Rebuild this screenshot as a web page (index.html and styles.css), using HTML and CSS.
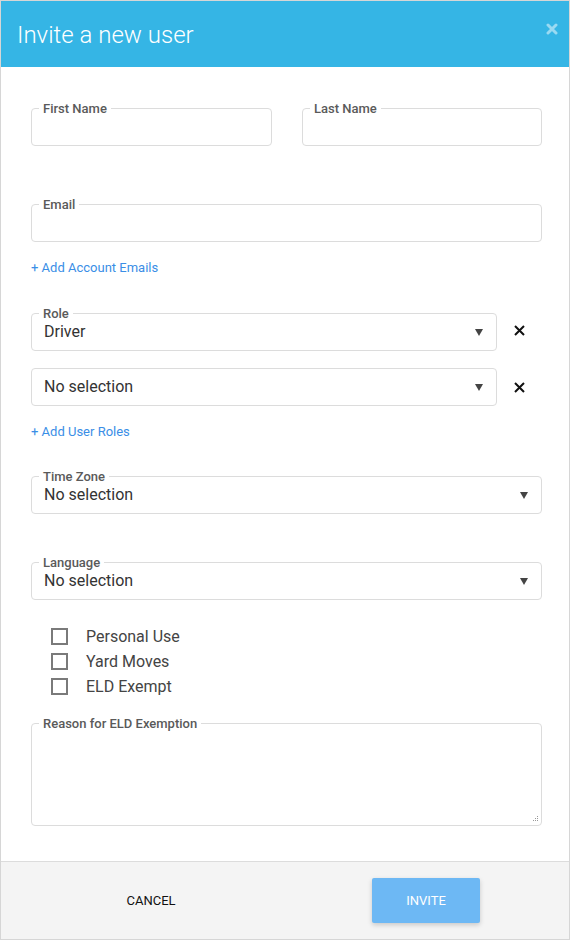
FILE: index.html
```html
<!DOCTYPE html>
<html lang="en">
<head>
<meta charset="utf-8">
<title>Invite a new user</title>
<link rel="stylesheet" href="styles.css">
</head>
<body>
<div class="modal">
  <header class="modal-header">
    <h1 class="modal-title">Invite a new user</h1>
    <button class="close-btn" aria-label="Close">
      <svg width="12" height="12" viewBox="0 0 12 12"><path d="M2 2 L10 10 M10 2 L2 10" stroke="currentColor" stroke-width="3" stroke-linecap="round"/></svg>
    </button>
  </header>

  <main class="modal-body">
    <div class="row-2">
      <fieldset class="field"><legend>First Name</legend><div class="value"></div></fieldset>
      <fieldset class="field"><legend>Last Name</legend><div class="value"></div></fieldset>
    </div>

    <fieldset class="field gap-51"><legend>Email</legend><div class="value"></div></fieldset>
    <a class="add-link" href="#">+ Add Account Emails</a>

    <div class="role-row gap-30">
      <fieldset class="field select"><legend>Role</legend><div class="value">Driver</div>
        <svg class="arrow" width="8" height="7" viewBox="0 0 8 7"><path d="M0 0 H8 L4 7 Z" fill="#444"/></svg>
      </fieldset>
      <button class="remove-btn remove-legend" aria-label="Remove">
        <svg width="11" height="11" viewBox="0 0 11 11"><path d="M1 1 L10 10 M10 1 L1 10" stroke="#111" stroke-width="2"/></svg>
      </button>
    </div>
    <div class="role-row gap-17">
      <div class="box select"><div class="value">No selection</div>
        <svg class="arrow" width="8" height="7" viewBox="0 0 8 7"><path d="M0 0 H8 L4 7 Z" fill="#444"/></svg>
      </div>
      <button class="remove-btn" aria-label="Remove">
        <svg width="11" height="11" viewBox="0 0 11 11"><path d="M1 1 L10 10 M10 1 L1 10" stroke="#111" stroke-width="2"/></svg>
      </button>
    </div>
    <a class="add-link" href="#">+ Add User Roles</a>

    <fieldset class="field select gap-29"><legend>Time Zone</legend><div class="value">No selection</div>
      <svg class="arrow" width="8" height="7" viewBox="0 0 8 7"><path d="M0 0 H8 L4 7 Z" fill="#444"/></svg>
    </fieldset>

    <fieldset class="field select gap-41"><legend>Language</legend><div class="value">No selection</div>
      <svg class="arrow" width="8" height="7" viewBox="0 0 8 7"><path d="M0 0 H8 L4 7 Z" fill="#444"/></svg>
    </fieldset>

    <ul class="checks">
      <li><span class="checkbox"></span><span>Personal Use</span></li>
      <li><span class="checkbox"></span><span>Yard Moves</span></li>
      <li><span class="checkbox"></span><span>ELD Exempt</span></li>
    </ul>

    <fieldset class="field textarea"><legend>Reason for ELD Exemption</legend>
      <div class="textarea-area">
        <svg class="grip" width="7" height="7" viewBox="0 0 7 7">
          <rect x="5" y="0" width="1" height="1" fill="#999"/>
          <rect x="3" y="2" width="1" height="1" fill="#999"/>
          <rect x="5" y="2" width="1" height="1" fill="#999"/>
          <rect x="1" y="4" width="1" height="1" fill="#999"/>
          <rect x="3" y="4" width="1" height="1" fill="#999"/>
          <rect x="5" y="4" width="1" height="1" fill="#999"/>
        </svg>
      </div>
    </fieldset>
  </main>

  <footer class="modal-footer">
    <button class="btn-cancel">CANCEL</button>
    <button class="btn-invite">INVITE</button>
  </footer>
</div>
</body>
</html>
```

FILE: styles.css
```css
* { box-sizing: border-box; }

html, body {
  margin: 0;
  padding: 0;
  background: #fff;
}

body {
  font-family: Roboto, "Liberation Sans", Arial, sans-serif;
  color: #333;
}

.modal {
  width: 570px;
  height: 940px;
  border: 1px solid #d6d6d6;
  display: flex;
  flex-direction: column;
  background: #fff;
}

.modal-header {
  height: 66px;
  background: #35b5e5;
  display: flex;
  align-items: flex-start;
  justify-content: space-between;
  padding: 0 11px 0 16px;
}

.modal-title {
  margin: 0;
  font-weight: 300;
  font-size: 24px;
  line-height: 28px;
  color: #fff;
  padding-top: 20px;
}

.close-btn {
  border: 0;
  background: none;
  padding: 0;
  margin-top: 22px;
  width: 12px;
  height: 12px;
  color: rgba(255, 255, 255, 0.5);
  display: block;
}
.close-btn svg { display: block; }

.modal-body {
  flex: 1;
  padding: 34px 27px 0 30px;
  display: flex;
  flex-direction: column;
}

.row-2 {
  display: grid;
  grid-template-columns: 241px 240px;
  column-gap: 30px;
}

.field {
  margin: 0;
  min-width: 0;
  border: 1px solid #dcdcdc;
  border-radius: 4px;
  padding: 3px 12px 9px 12px;
  position: relative;
}

.field legend {
  font-size: 13px;
  line-height: 12px;
  height: 14px;
  font-weight: 500;
  color: #5a5a5a;
  padding: 2px 4px 0 4px;
  margin-left: -5px;
}

.value {
  font-size: 16px;
  line-height: 18px;
  height: 18px;
  color: #333;
}

.box {
  border: 1px solid #dcdcdc;
  border-radius: 4px;
  padding: 9px 12px 9px 12px;
  position: relative;
  flex: 1;
}

.select { display: flex; align-items: center; justify-content: space-between; }
.select .value { flex: 1; }
.select .arrow { flex: none; display: block; margin-right: 1px; }

.gap-51 { margin-top: 51px; }
.gap-30 { margin-top: 30px; }
.gap-29 { margin-top: 29px; }
.gap-41 { margin-top: 41px; }
.gap-17 { margin-top: 17px; }

.add-link {
  display: block;
  margin-top: 18px;
  font-size: 13px;
  line-height: 16px;
  color: #3a8ee6;
  text-decoration: none;
  align-self: flex-start;
}

.role-row {
  display: flex;
  align-items: stretch;
}
.role-row .field { flex: 1; }

.remove-btn {
  flex: none;
  width: 45px;
  border: 0;
  background: none;
  padding: 0;
  display: flex;
  align-items: center;
  justify-content: center;
}
.remove-legend { padding-top: 4px; }

.checks {
  list-style: none;
  margin: 24px 0 0 0;
  padding: 0 0 0 20px;
}
.checks li {
  display: flex;
  align-items: center;
  height: 25px;
  font-size: 16px;
  color: #444;
}
.checkbox {
  width: 17px;
  height: 17px;
  border: 2px solid #7a7a7a;
  margin-right: 18px;
  flex: none;
}

.textarea {
  margin-top: 17px;
  padding: 0 0 0 12px;
}
.textarea-area {
  height: 95px;
  display: flex;
  align-items: flex-end;
  justify-content: flex-end;
  padding: 0 2px 2px 0;
}
.grip { display: block; }

.modal-footer {
  height: 78px;
  flex: none;
  border-top: 1px solid #dcdcdc;
  background: #f4f4f4;
  display: flex;
  align-items: center;
  padding-left: 96px;
  gap: 167px;
}

.btn-cancel, .btn-invite {
  width: 108px;
  height: 45px;
  border: 0;
  font-family: Roboto, "Liberation Sans", Arial, sans-serif;
  font-size: 13px;
  padding: 0;
}
.btn-cancel {
  background: none;
  color: #111;
}
.btn-invite {
  background: #6db8f4;
  color: #fff;
  border-radius: 2px;
  box-shadow: 0 2px 5px rgba(0, 0, 0, 0.18);
}
```
